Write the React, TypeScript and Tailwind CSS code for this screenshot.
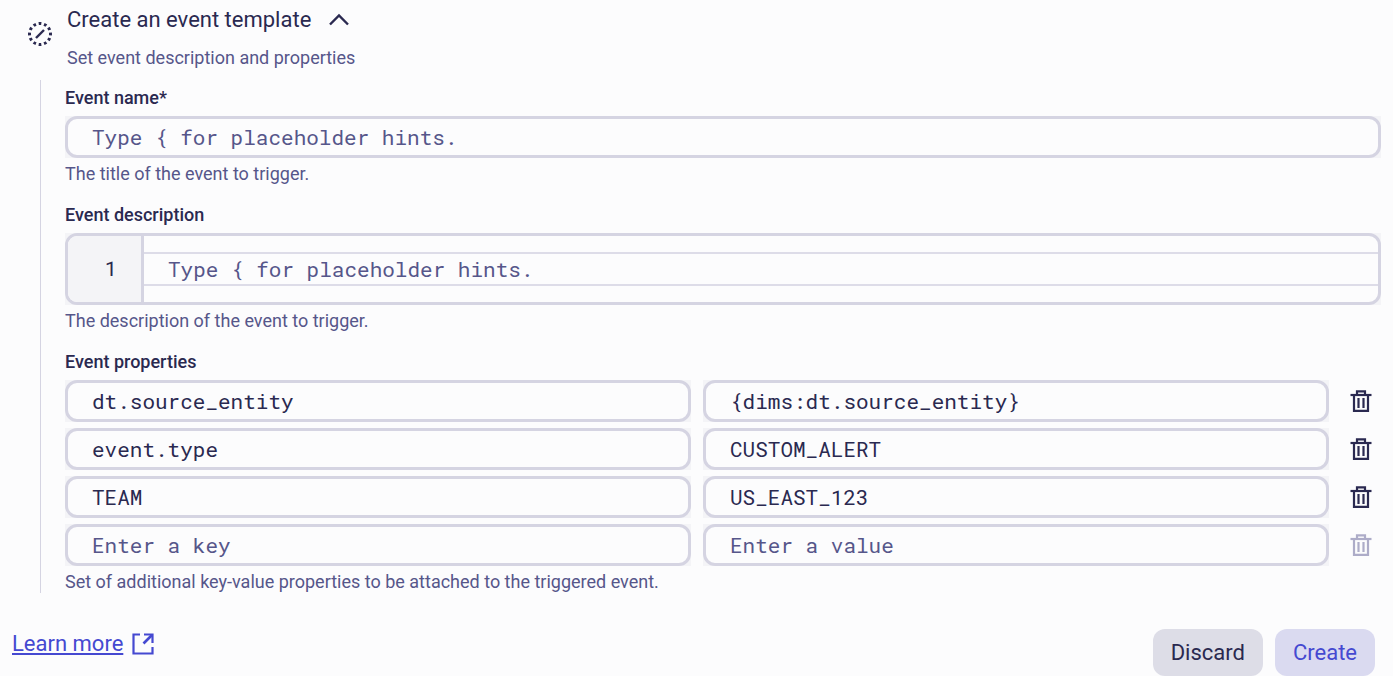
import { useState } from "react";

interface EventProperty {
    id: string;
    key: string;
    value: string;
}

const initialProperties: EventProperty[] = [
    { id: "source", key: "dt.source_entity", value: "{dims:dt.source_entity}" },
    { id: "type", key: "event.type", value: "CUSTOM_ALERT" },
    { id: "team", key: "TEAM", value: "US_EAST_123" },
    { id: "new", key: "", value: "" },
];

const StepIcon = () => (
    <svg width="24" height="24" viewBox="0 0 24 24" fill="none" stroke="#2a2950" aria-hidden="true">
        <circle
            cx="12"
            cy="12"
            r="10.5"
            strokeWidth="3"
            pathLength="120"
            strokeDasharray="5 5"
            strokeDashoffset="2.5"
        />
        <path d="M8 16 16 8" strokeWidth="2.4" />
    </svg>
);

const TrashIcon = () => (
    <svg width="24" height="24" viewBox="0 0 24 24" fill="none" stroke="currentColor" strokeWidth="2.2" aria-hidden="true">
        <path d="M1.5 6h21" />
        <path d="M8 5.5V2.4h8v3.1" />
        <path d="M5 6v15.8h14V6" />
        <path d="M9.5 9v10M14.5 9v10" />
    </svg>
);

const ExternalIcon = () => (
    <svg width="24" height="24" viewBox="0 0 24 24" fill="none" stroke="currentColor" strokeWidth="2.2" aria-hidden="true">
        <path d="M9 2.5H2.5v19h19V15" />
        <path d="M13 2.5h8.5V11" />
        <path d="M21 3 12.5 11.5" strokeWidth="2.6" />
    </svg>
);

interface TextFieldProps {
    id?: string;
    label?: string;
    value: string;
    placeholder: string;
    onChange: (value: string) => void;
}

const TextField = ({ id, label, value, placeholder, onChange }: TextFieldProps) => (
    <div className="min-w-0 bg-[#f4f4f7]">
        <input
            id={id}
            type="text"
            aria-label={label}
            value={value}
            placeholder={placeholder}
            onChange={(e) => onChange(e.target.value)}
            className="block h-[42px] w-full rounded-[12px] border-[3px] border-[#d5d4e2] bg-[#fcfcfd] px-6 font-['Roboto_Mono','DejaVu_Sans_Mono',monospace] text-[21px] text-[#2a2950] outline-none placeholder:text-[#56568a]"
        />
    </div>
);

const App = () => {
    const [open, setOpen] = useState(true);
    const [name, setName] = useState("");
    const [description, setDescription] = useState("");
    const [properties, setProperties] = useState(initialProperties);

    const update = (id: string, patch: Partial<EventProperty>) => {
        setProperties(properties.map((p) => (p.id === id ? { ...p, ...patch } : p)));
    };

    const remove = (id: string) => {
        setProperties(properties.filter((p) => p.id !== id));
    };

    return (
        <main className="min-h-screen bg-[#fcfcfd] font-['Roboto',sans-serif] text-[#2a2950]">
            <header className="flex pl-7">
                <div className="pt-[22px]">
                    <StepIcon />
                </div>
                <div className="pl-[15px]">
                    <h2 className="text-[22px] leading-10">
                        <button
                            type="button"
                            aria-expanded={open}
                            onClick={() => setOpen(!open)}
                            className="flex items-center gap-[18px]"
                        >
                            Create an event template
                            <svg width="20" height="20" viewBox="0 0 20 20" fill="none" stroke="currentColor" strokeWidth="2.4" aria-hidden="true">
                                <path d="M1 14.5 10 5.5l9 9" />
                            </svg>
                        </button>
                    </h2>
                    <p className="text-[18px] leading-9 text-[#56568a]">
                        Set event description and properties
                    </p>
                </div>
            </header>

            {open && (
                <section className="mt-1 flex pl-10 pr-3">
                    <div className="mb-[5px] w-px shrink-0 bg-[#d5d4e2]" />
                    <div className="flex min-w-0 grow flex-col gap-[7px] pl-6 text-[18px]">
                        <div>
                            <label htmlFor="event-name" className="block font-medium leading-9">
                                Event name*
                            </label>
                            <TextField
                                id="event-name"
                                value={name}
                                placeholder="Type { for placeholder hints."
                                onChange={setName}
                            />
                            <p className="leading-8 text-[#56568a]">The title of the event to trigger.</p>
                        </div>

                        <div>
                            <label htmlFor="event-description" className="block font-medium leading-9">
                                Event description
                            </label>
                            <div className="bg-[#f4f4f7]">
                                <div className="flex overflow-hidden rounded-[12px] border-[3px] border-[#d5d4e2] bg-[#fcfcfd] font-['Roboto_Mono','DejaVu_Sans_Mono',monospace] text-[21px]">
                                    <div className="flex w-[76px] shrink-0 items-center justify-end border-r-[3px] border-[#d5d4e2] bg-[#f4f4f7] pr-6">
                                        1
                                    </div>
                                    <textarea
                                        id="event-description"
                                        rows={1}
                                        value={description}
                                        placeholder="Type { for placeholder hints."
                                        onChange={(e) => setDescription(e.target.value)}
                                        className="my-4 block h-[34px] min-w-0 grow resize-none overflow-hidden border-y-2 border-[#dddce8] px-6 leading-[30px] outline-none placeholder:text-[#56568a]"
                                    />
                                </div>
                            </div>
                            <p className="leading-8 text-[#56568a]">The description of the event to trigger.</p>
                        </div>

                        <fieldset className="min-w-0">
                            <legend className="font-medium leading-9">Event properties</legend>
                            <div className="flex flex-col gap-1.5">
                                {properties.map((p) => (
                                    <div key={p.id} className="grid grid-cols-[1fr_1fr_40px] gap-x-3">
                                        <TextField
                                            label="Property key"
                                            value={p.key}
                                            placeholder="Enter a key"
                                            onChange={(key) => update(p.id, { key })}
                                        />
                                        <TextField
                                            label="Property value"
                                            value={p.value}
                                            placeholder="Enter a value"
                                            onChange={(value) => update(p.id, { value })}
                                        />
                                        <button
                                            type="button"
                                            aria-label="Delete property"
                                            disabled={!p.key && !p.value}
                                            onClick={() => remove(p.id)}
                                            className="flex items-center justify-center disabled:text-[#adacc8]"
                                        >
                                            <TrashIcon />
                                        </button>
                                    </div>
                                ))}
                            </div>
                            <p className="leading-8 text-[#56568a]">
                                Set of additional key-value properties to be attached to the triggered event.
                            </p>
                        </fieldset>
                    </div>
                </section>
            )}

            <footer className="mt-[31px] flex items-start justify-between pl-3 pr-[18px] text-[22px]">
                <a href="#learn-more" className="flex items-center gap-2 leading-[30px] text-[#4549d1]">
                    <span className="underline decoration-2 underline-offset-2">Learn more</span>
                    <ExternalIcon />
                </a>
                <div className="flex gap-3">
                    <button type="button" className="h-[47px] rounded-[12px] bg-[#dddde7] px-[18px]">
                        Discard
                    </button>
                    <button type="button" className="h-[47px] rounded-[12px] bg-[#dadaf0] px-[18px] text-[#4549d1]">
                        Create
                    </button>
                </div>
            </footer>
        </main>
    );
};

export default App;
